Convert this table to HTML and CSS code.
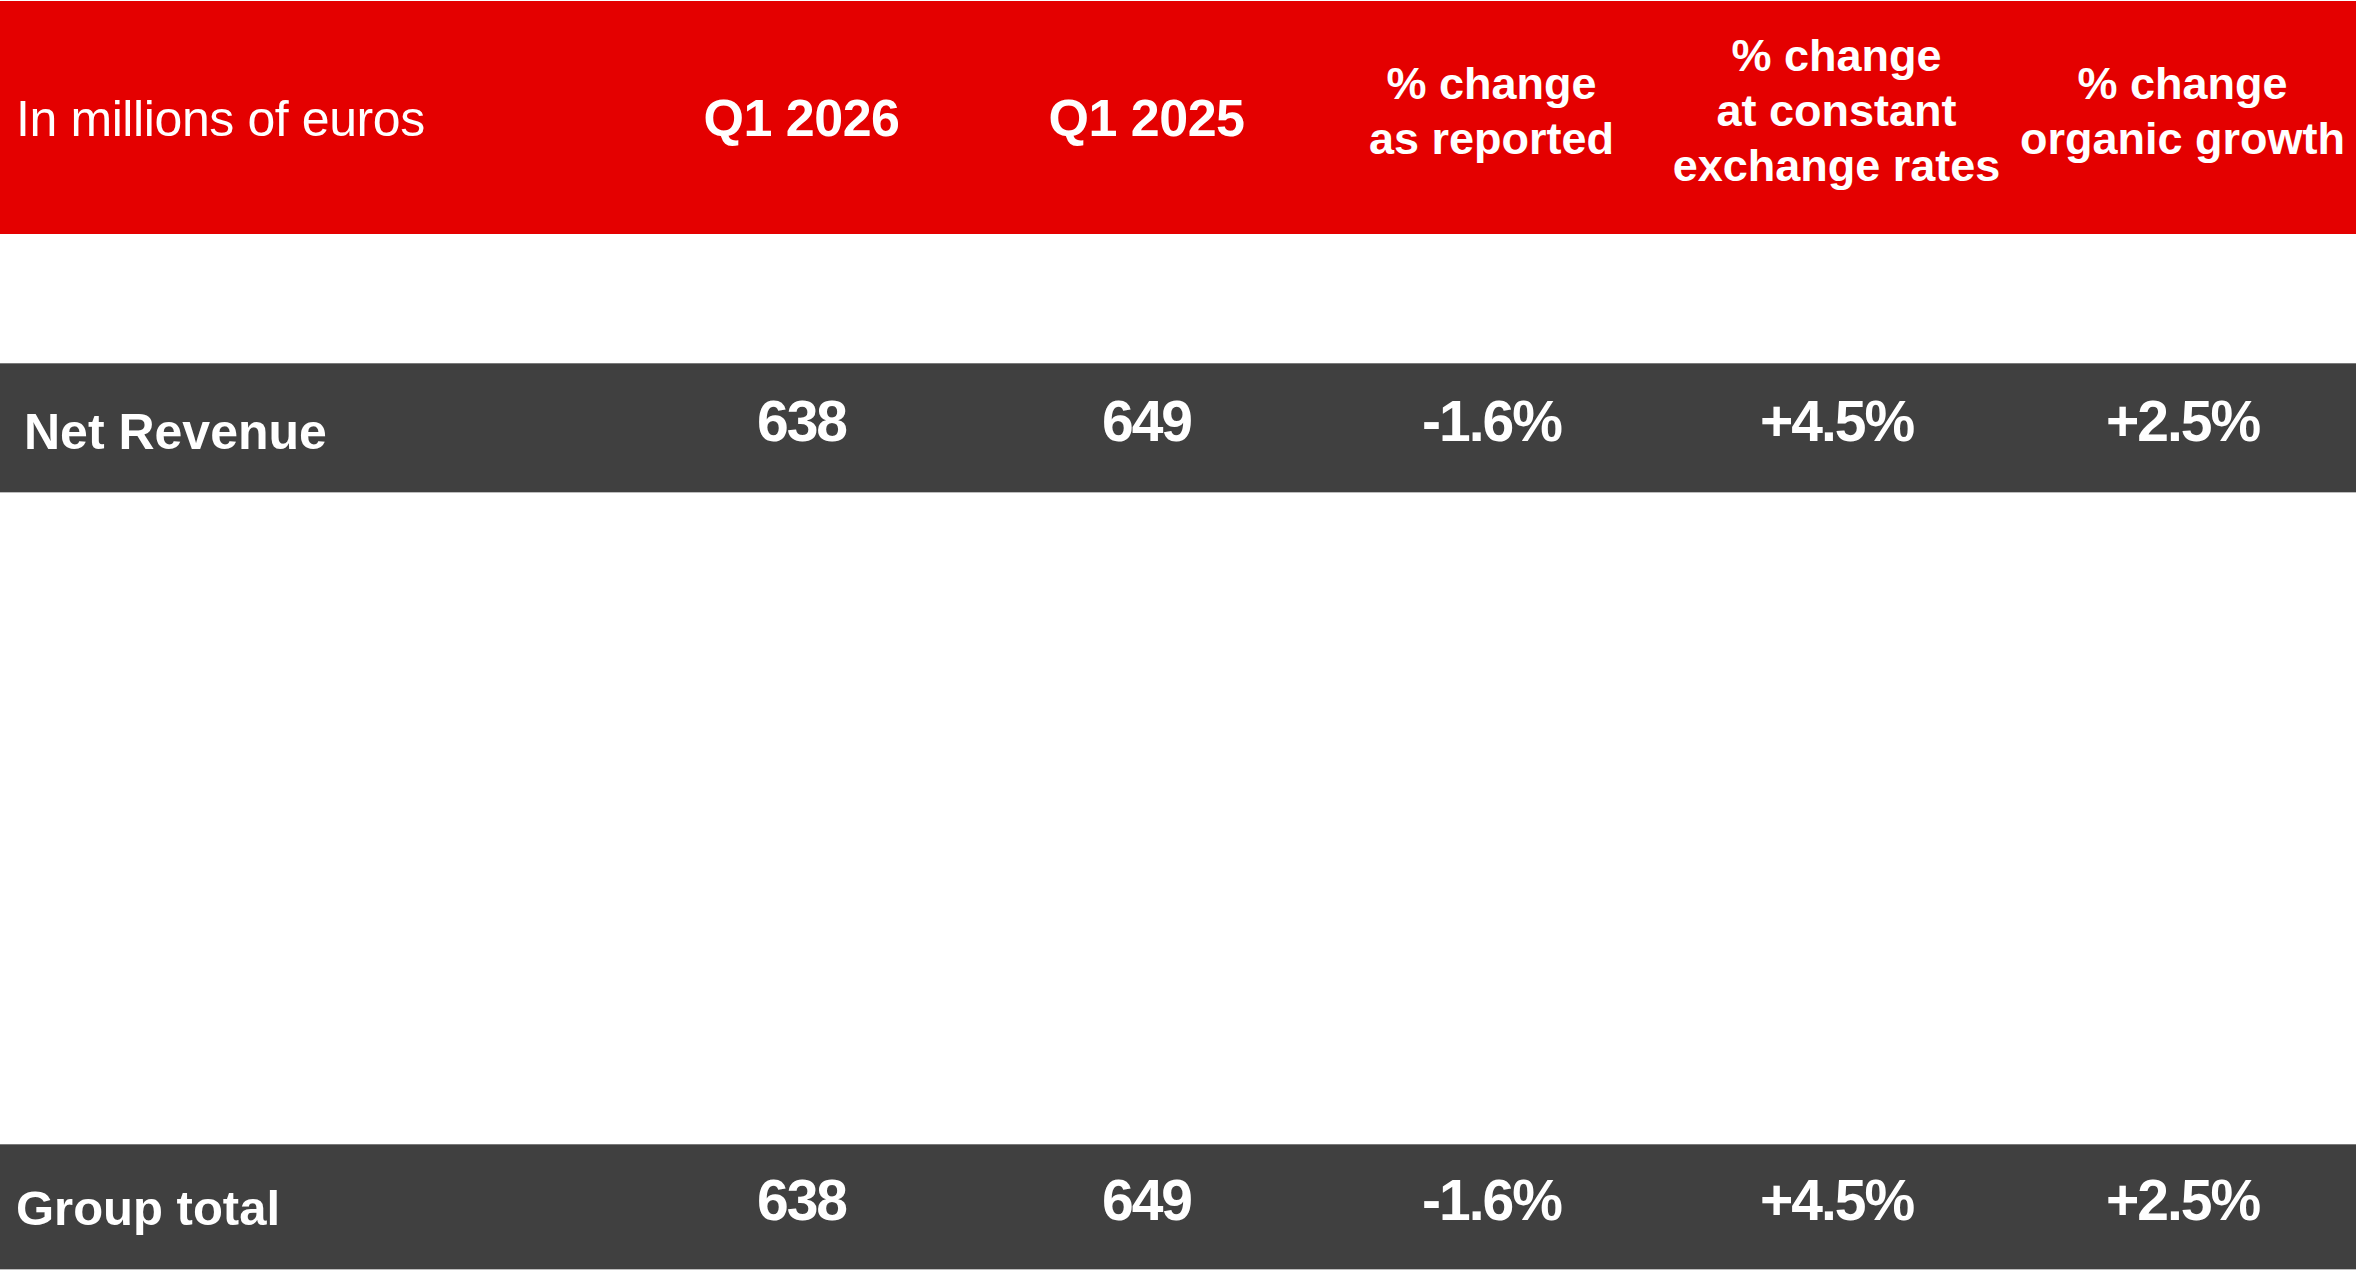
FILE: index.html
```html
<!DOCTYPE html>
<html lang="en">
<head>
<meta charset="utf-8">
<title>Q1 2026 revenue</title>
<link rel="stylesheet" href="styles.css">
</head>
<body>
<div class="table">
  <div class="row head">
    <div class="cell label-head">In millions of euros</div>
    <div class="cell period">Q1 2026</div>
    <div class="cell period">Q1 2025</div>
    <div class="cell multi">% change<br>as reported</div>
    <div class="cell multi">% change<br>at constant<br>exchange rates</div>
    <div class="cell multi">% change<br>organic growth</div>
  </div>
  <div class="spacer-top"></div>
  <div class="row dark net">
    <div class="cell label">Net Revenue</div>
    <div class="cell value">638</div>
    <div class="cell value">649</div>
    <div class="cell value">-1.6%</div>
    <div class="cell value">+4.5%</div>
    <div class="cell value">+2.5%</div>
  </div>
  <div class="spacer-mid"></div>
  <div class="row dark total">
    <div class="cell label">Group total</div>
    <div class="cell value">638</div>
    <div class="cell value">649</div>
    <div class="cell value">-1.6%</div>
    <div class="cell value">+4.5%</div>
    <div class="cell value">+2.5%</div>
  </div>
</div>
</body>
</html>
```

FILE: styles.css
```css
html, body {
  margin: 0;
  padding: 0;
  background: #ffffff;
}

body {
  font-family: "Liberation Sans", Arial, sans-serif;
  color: #ffffff;
}

.table {
  width: 2356px;
  padding-top: 1px;
}

.row {
  display: grid;
  grid-template-columns: 629px 345px 345px 345px 345px 347px;
  align-items: center;
}

.head {
  background: #e40000;
  height: 233px;
}

.cell {
  text-align: center;
}

.label-head {
  text-align: left;
  padding-left: 16px;
  font-size: 50px;
  font-weight: 400;
  letter-spacing: -0.4px;
  padding-top: 2px;
}

.period {
  font-size: 52px;
  font-weight: 700;
  letter-spacing: -0.5px;
}

.multi {
  font-size: 45px;
  font-weight: 700;
  line-height: 55px;
  padding-bottom: 14px;
}

.spacer-top {
  height: 129px;
}

.spacer-mid {
  height: 651px;
}

.dark {
  background: #404040;
  border-top: 1px solid #7a7a7a;
  border-bottom: 1px solid #bdbdbd;
}

.net {
  height: 128px;
}

.total {
  height: 124px;
}

.label {
  text-align: left;
  font-weight: 700;
}

.net .label {
  padding-left: 24px;
  font-size: 50px;
  padding-top: 8px;
}

.total .label {
  padding-left: 16px;
  font-size: 49px;
  padding-top: 2px;
}

.value {
  font-size: 57px;
  font-weight: 700;
  letter-spacing: -2px;
  padding-bottom: 14px;
}
```
